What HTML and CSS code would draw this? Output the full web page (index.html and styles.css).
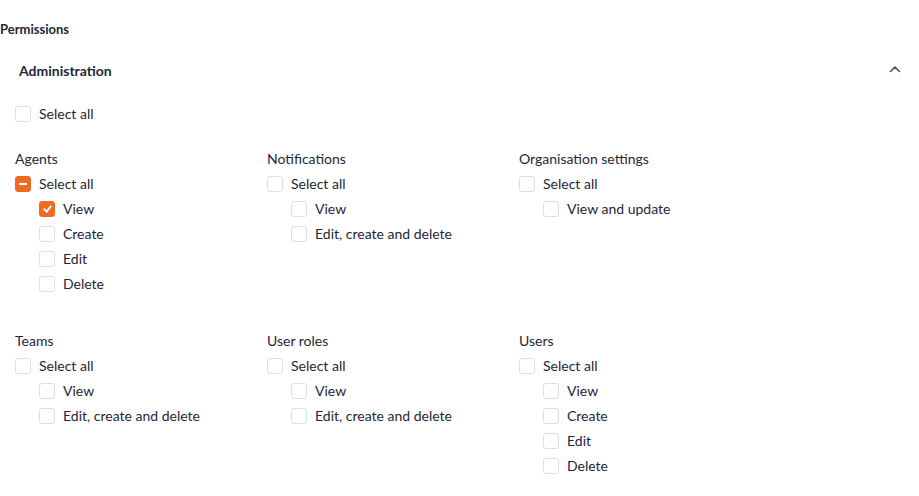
FILE: index.html
```html
<!DOCTYPE html>
<html lang="en">
<head>
    <meta charset="UTF-8">
    <meta name="viewport" content="width=device-width, initial-scale=1.0">
    <title>Permissions</title>
    <link rel="stylesheet" href="styles.css">
</head>
<body>
    <div class="permissions">
        <h2 class="page-title">Permissions</h2>

        <div class="section">
            <div class="section-header">
                <h3>Administration</h3>
                <svg class="chevron" width="12" height="8" viewBox="0 0 12 8">
                    <path d="M1.5 6.5 L6 2 L10.5 6.5" fill="none" stroke="#4a4f5c" stroke-width="1.6" stroke-linecap="round" stroke-linejoin="round"/>
                </svg>
            </div>

            <label class="row"><span class="box"></span>Select all</label>

            <div class="groups">
                <div class="group">
                    <div class="group-title">Agents</div>
                    <label class="row"><span class="box partial"></span>Select all</label>
                    <label class="row sub"><span class="box checked"></span>View</label>
                    <label class="row sub"><span class="box"></span>Create</label>
                    <label class="row sub"><span class="box"></span>Edit</label>
                    <label class="row sub"><span class="box"></span>Delete</label>
                </div>
                <div class="group">
                    <div class="group-title">Notifications</div>
                    <label class="row"><span class="box"></span>Select all</label>
                    <label class="row sub"><span class="box"></span>View</label>
                    <label class="row sub"><span class="box"></span>Edit, create and delete</label>
                </div>
                <div class="group">
                    <div class="group-title">Organisation settings</div>
                    <label class="row"><span class="box"></span>Select all</label>
                    <label class="row sub"><span class="box"></span>View and update</label>
                </div>
                <div class="group">
                    <div class="group-title">Teams</div>
                    <label class="row"><span class="box"></span>Select all</label>
                    <label class="row sub"><span class="box"></span>View</label>
                    <label class="row sub"><span class="box"></span>Edit, create and delete</label>
                </div>
                <div class="group">
                    <div class="group-title">User roles</div>
                    <label class="row"><span class="box"></span>Select all</label>
                    <label class="row sub"><span class="box"></span>View</label>
                    <label class="row sub"><span class="box"></span>Edit, create and delete</label>
                </div>
                <div class="group">
                    <div class="group-title">Users</div>
                    <label class="row"><span class="box"></span>Select all</label>
                    <label class="row sub"><span class="box"></span>View</label>
                    <label class="row sub"><span class="box"></span>Create</label>
                    <label class="row sub"><span class="box"></span>Edit</label>
                    <label class="row sub"><span class="box"></span>Delete</label>
                </div>
            </div>
        </div>
    </div>
</body>
</html>
```

FILE: styles.css
```css
body {
    font-family: 'Lato', 'Liberation Sans', sans-serif;
    background-color: #fff;
    color: #1f2638;
    margin: 0;
    padding: 0;
}
.permissions {
    padding-top: 19px;
}
.page-title {
    font-size: 13px;
    font-weight: 700;
    line-height: 20px;
    margin: 0;
}
.section {
    padding: 0 15px;
}
.section-header {
    display: flex;
    justify-content: space-between;
    align-items: center;
    height: 42px;
    padding: 0 3px 0 4px;
    margin-top: 10px;
    margin-bottom: 10px;
}
.section-header h3 {
    font-size: 14px;
    font-weight: 700;
    margin: 0;
}
.chevron {
    display: block;
    margin-top: -2px;
}
.row {
    display: flex;
    align-items: center;
    height: 25px;
    font-size: 14px;
    cursor: pointer;
}
.row.sub {
    padding-left: 24px;
}
.box {
    width: 16px;
    height: 16px;
    box-sizing: border-box;
    border: 1px solid #dcdfe3;
    border-radius: 3px;
    margin-right: 8px;
    flex-shrink: 0;
    position: relative;
}
.box.partial, .box.checked {
    background-color: #f06b22;
    border-color: #f06b22;
}
.box.partial::after {
    content: "";
    position: absolute;
    left: 3px;
    top: 6px;
    width: 8px;
    height: 2px;
    background-color: #fff;
}
.box.checked::after {
    content: "";
    position: absolute;
    left: 5px;
    top: 2px;
    width: 3px;
    height: 6px;
    border: solid #fff;
    border-width: 0 2px 2px 0;
    transform: rotate(40deg);
}
.groups {
    display: grid;
    grid-template-columns: 252px 252px 252px;
    row-gap: 32px;
    margin-top: 20px;
}
.group-title {
    font-size: 14px;
    line-height: 25px;
}
```
